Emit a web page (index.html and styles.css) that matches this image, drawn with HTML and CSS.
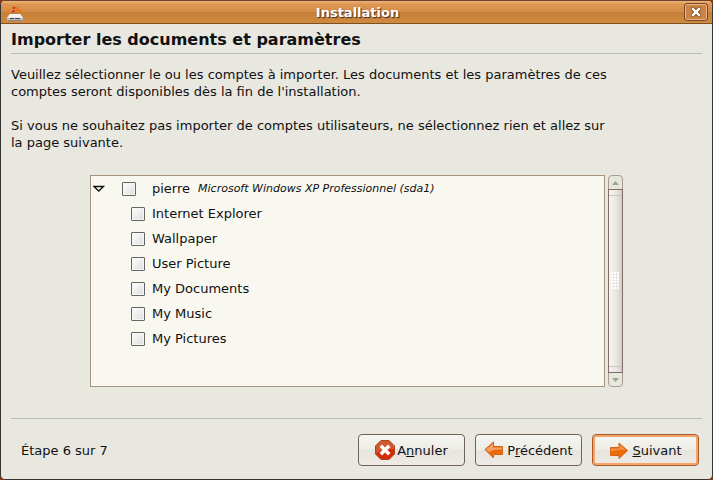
FILE: index.html
```
<!DOCTYPE html>
<html lang="fr">

<head>
    <meta charset="UTF-8">
    <title>Installation</title>
    <link rel="stylesheet" href="styles.css">
</head>

<body>
    <div class="window">
        <div class="titlebar">
            <svg class="app_icon" width="16" height="16" viewBox="0 0 16 16">
                <path d="M1.500 4.500L4 2.500M4 5l3 1.500M12 2.500l2.500 2L12 6" stroke="#f08028" stroke-width="1.300" />
                <path d="M5 2q3-2 6 1M9 4.500h5" stroke="#e86c18" stroke-width="1.600" />
                <path d="M6 2.500l2-1M5 6l3-1.500" stroke="#b8321a" stroke-width="1.500" />
                <path d="M2.500 8h11l2 3.500H.500z" fill="#f3f3f1" />
                <rect x="0" y="11" width="16" height="4" rx="1" fill="#b9b9b7" />
                <path d="M0 11.500h16" stroke="#e8e8e6" />
                <path d="M3 12.500h4M8 12.500h5" stroke="#444" />
                <path d="M1 14.500h14" stroke="#8b8884" />
            </svg>
            <span class="window_title">Installation</span>
            <button class="close_btn" type="button" aria-label="Fermer">
                <svg width="10" height="10" viewBox="0 0 10 10">
                    <path d="M2 2l6 6M8 2l-6 6" stroke="#80501f" stroke-width="4.400" stroke-linecap="square" />
                    <path d="M2 2l6 6M8 2l-6 6" stroke="#fff" stroke-width="2.400" stroke-linecap="square" />
                </svg>
            </button>
        </div>

        <div class="content">
            <h1>Importer les documents et paramètres</h1>

            <div class="intro">
                <p>Veuillez sélectionner le ou les comptes à importer. Les documents et les paramètres de ces comptes seront disponibles dès la fin de l'installation.</p>
                <p>Si vous ne souhaitez pas importer de comptes utilisateurs, ne sélectionnez rien et allez sur la page suivante.</p>
            </div>

            <div class="accounts">
                <div class="tree">
                    <div class="row">
                        <button class="expander" type="button" aria-label="Replier">
                            <svg width="13" height="8" viewBox="0 0 13 8">
                                <path d="M1 1.500h9.500l-4.750 4.500z" fill="#f8f8f0" stroke="#111" stroke-width="1.300" />
                            </svg>
                        </button>
                        <label><input type="checkbox"><span>pierre</span><i class="system">Microsoft Windows XP Professionnel (sda1)</i></label>
                    </div>
                    <div class="row child"><label><input type="checkbox"><span>Internet Explorer</span></label></div>
                    <div class="row child"><label><input type="checkbox"><span>Wallpaper</span></label></div>
                    <div class="row child"><label><input type="checkbox"><span>User Picture</span></label></div>
                    <div class="row child"><label><input type="checkbox"><span>My Documents</span></label></div>
                    <div class="row child"><label><input type="checkbox"><span>My Music</span></label></div>
                    <div class="row child"><label><input type="checkbox"><span>My Pictures</span></label></div>
                </div>
                <div class="scrollbar">
                    <button class="arrow" type="button" aria-label="Monter">
                        <svg width="7" height="4" viewBox="0 0 7 4"><path d="M0 4L3.500 0 7 4z" fill="#a69d94" /></svg>
                    </button>
                    <div class="thumb">
                        <div class="grip"></div>
                    </div>
                    <button class="arrow" type="button" aria-label="Descendre">
                        <svg width="7" height="4" viewBox="0 0 7 4"><path d="M0 0h7L3.500 4z" fill="#a69d94" /></svg>
                    </button>
                </div>
            </div>

            <div class="footer">
                <span class="step">Étape 6 sur 7</span>
                <button class="btn" type="button">
                    <svg width="20" height="20" viewBox="0 0 20 20">
                        <path d="M6 .500h8L19.500 6v8L14 19.500H6L.500 14V6z" fill="#d42c06" stroke="#b0401e" />
                        <path d="M6 1h8l5 5v3Q9 9 1 13V6z" fill="#cf5a30" />
                        <path d="M7 7l6 6M13 7l-6 6" stroke="#fff" stroke-width="3.400" stroke-linecap="square" />
                    </svg>
                    <span>A<u>n</u>nuler</span>
                </button>
                <button class="btn previous" type="button">
                    <svg width="20" height="18" viewBox="0 0 20 18">
                        <path d="M1 8.500L9.500 1v4.500H18.500v8H9.500V17z" fill="#ec6a08" stroke="#d06418" stroke-linejoin="round" />
                        <path d="M2 8.500L9 2.500v4h9v2Q9 8 5 11z" fill="#f6a064" />
                    </svg>
                    <span>P<u>r</u>écédent</span>
                </button>
                <button class="btn next" type="button">
                    <svg width="20" height="18" viewBox="0 0 20 18">
                        <path d="M18.500 9.500L10 2v4.500H1.500v8H10V17.500z" fill="#ec6a08" stroke="#d06418" stroke-linejoin="round" />
                        <path d="M17 9L10.500 3.500v4H2v3Q9 8 17 9z" fill="#f6904a" />
                    </svg>
                    <span><u>S</u>uivant</span>
                </button>
            </div>
        </div>
    </div>
</body>

</html>
```

FILE: styles.css
```
* {
    box-sizing: border-box;
}

body {
    margin: 0;
    background-color: #8b3a14;
    font-family: "DejaVu Sans", Verdana, sans-serif;
    font-size: 13px;
    line-height: 17px;
    color: #111;
}

button {
    font: inherit;
    color: inherit;
    padding: 0;
}

svg {
    display: block;
    fill: none;
    flex-shrink: 0;
}

.window {
    display: flex;
    flex-direction: column;
    min-height: 100vh;
    border: 1px solid #363432;
    border-top-color: #6a422d;
    border-radius: 5px;
    overflow: hidden;
    background-color: #e8e7e0;
}

.titlebar {
    display: flex;
    align-items: center;
    height: 23px;
    padding: 0 4px 0 6px;
    border-bottom: 1px solid #80501f;
    background-image: linear-gradient(#efb078, #dd9752 15%, #d48d48 48%, #c67f37 52%, #cf8a42);
}

.app_icon {
    margin-top: 3px;
}

.window_title {
    flex: 1;
    padding-left: 8px;
    text-align: center;
    font-weight: bold;
    color: #fff;
    text-shadow: 1px 1px 1px #3f2a18;
}

.close_btn {
    display: flex;
    align-items: center;
    justify-content: center;
    width: 24px;
    height: 18px;
    border: 1px solid #744826;
    border-radius: 3px;
    background-color: #c98443;
    box-shadow: inset 0 0 0 1px #edb586;
}

.content {
    display: flex;
    flex-direction: column;
    flex: 1;
    padding: 0 10px;
}

h1 {
    margin: 0;
    padding: 6px 0 3px;
    border-bottom: 1px solid #b9b9b5;
    font-size: 16px;
    line-height: 20px;
}

.intro {
    max-width: 600px;
    padding-top: 12px;
}

.intro p {
    margin: 0 0 17px;
}

.accounts {
    display: flex;
    gap: 3px;
    flex: 1;
    margin: 7px 79px 31px;
}

.tree {
    flex: 1;
    border: 1px solid #a8937f;
    background-color: #f8f8f0;
}

.row {
    display: flex;
    align-items: center;
    height: 25px;
    padding-left: 2px;
}

.row label {
    display: flex;
    align-items: center;
    padding-left: 16px;
}

.row.child {
    padding-left: 24px;
}

.row.child input {
    margin-right: 7px;
}

.expander {
    border: none;
    background: none;
}

.row input {
    appearance: none;
    width: 14px;
    height: 14px;
    margin: 0 16px 0 0;
    border: 1px solid #666660;
    border-radius: 1px;
    background-image: linear-gradient(135deg, #fff, #dcdcdc);
    box-shadow: inset 0 0 0 1px #f6f6f4;
}

.system {
    margin-left: 8px;
    font-size: 11px;
}

.scrollbar {
    display: flex;
    flex-direction: column;
    width: 15px;
    border: 1px solid #a89c90;
    border-radius: 4px;
    background-color: #e5e8dd;
}

.arrow {
    display: flex;
    align-items: center;
    justify-content: center;
    height: 13px;
    border: none;
    background: none;
}

.thumb {
    display: flex;
    align-items: center;
    justify-content: center;
    flex: 1;
    margin: 0 -1px;
    border: 1px solid #7e7068;
    background-image: linear-gradient(#cfc5bd, #cfc5bd), linear-gradient(#cfc5bd, #cfc5bd), linear-gradient(90deg, #f6f4f2, #e9e5e1 60%, #d3cbc6);
    background-size: 100% 1px, 100% 1px, 100% 100%;
    background-position: 0 5px, 0 calc(100% - 5px), 0 0;
    background-repeat: no-repeat;
}

.grip {
    width: 9px;
    height: 18px;
    background-image: radial-gradient(circle at 1px 1px, #fff 1px, transparent 1px);
    background-size: 3px 3px;
}

.footer {
    display: flex;
    align-items: center;
    gap: 10px;
    padding: 15px 3px 13px 10px;
    border-top: 1px solid #b9b9b5;
}

.step {
    flex: 1;
}

.btn {
    display: flex;
    align-items: center;
    justify-content: center;
    gap: 2px;
    width: 107px;
    height: 32px;
    border: 1px solid #6f625b;
    border-radius: 4px;
    background-image: linear-gradient(#f5f5f3, #eeeee6 48%, #e5e4df 50%, #f0eae7);
}

.previous,
.next {
    gap: 3px;
}

.next {
    border-color: #a85a2a;
    box-shadow: inset 0 0 0 2px #f7a365;
}
```
